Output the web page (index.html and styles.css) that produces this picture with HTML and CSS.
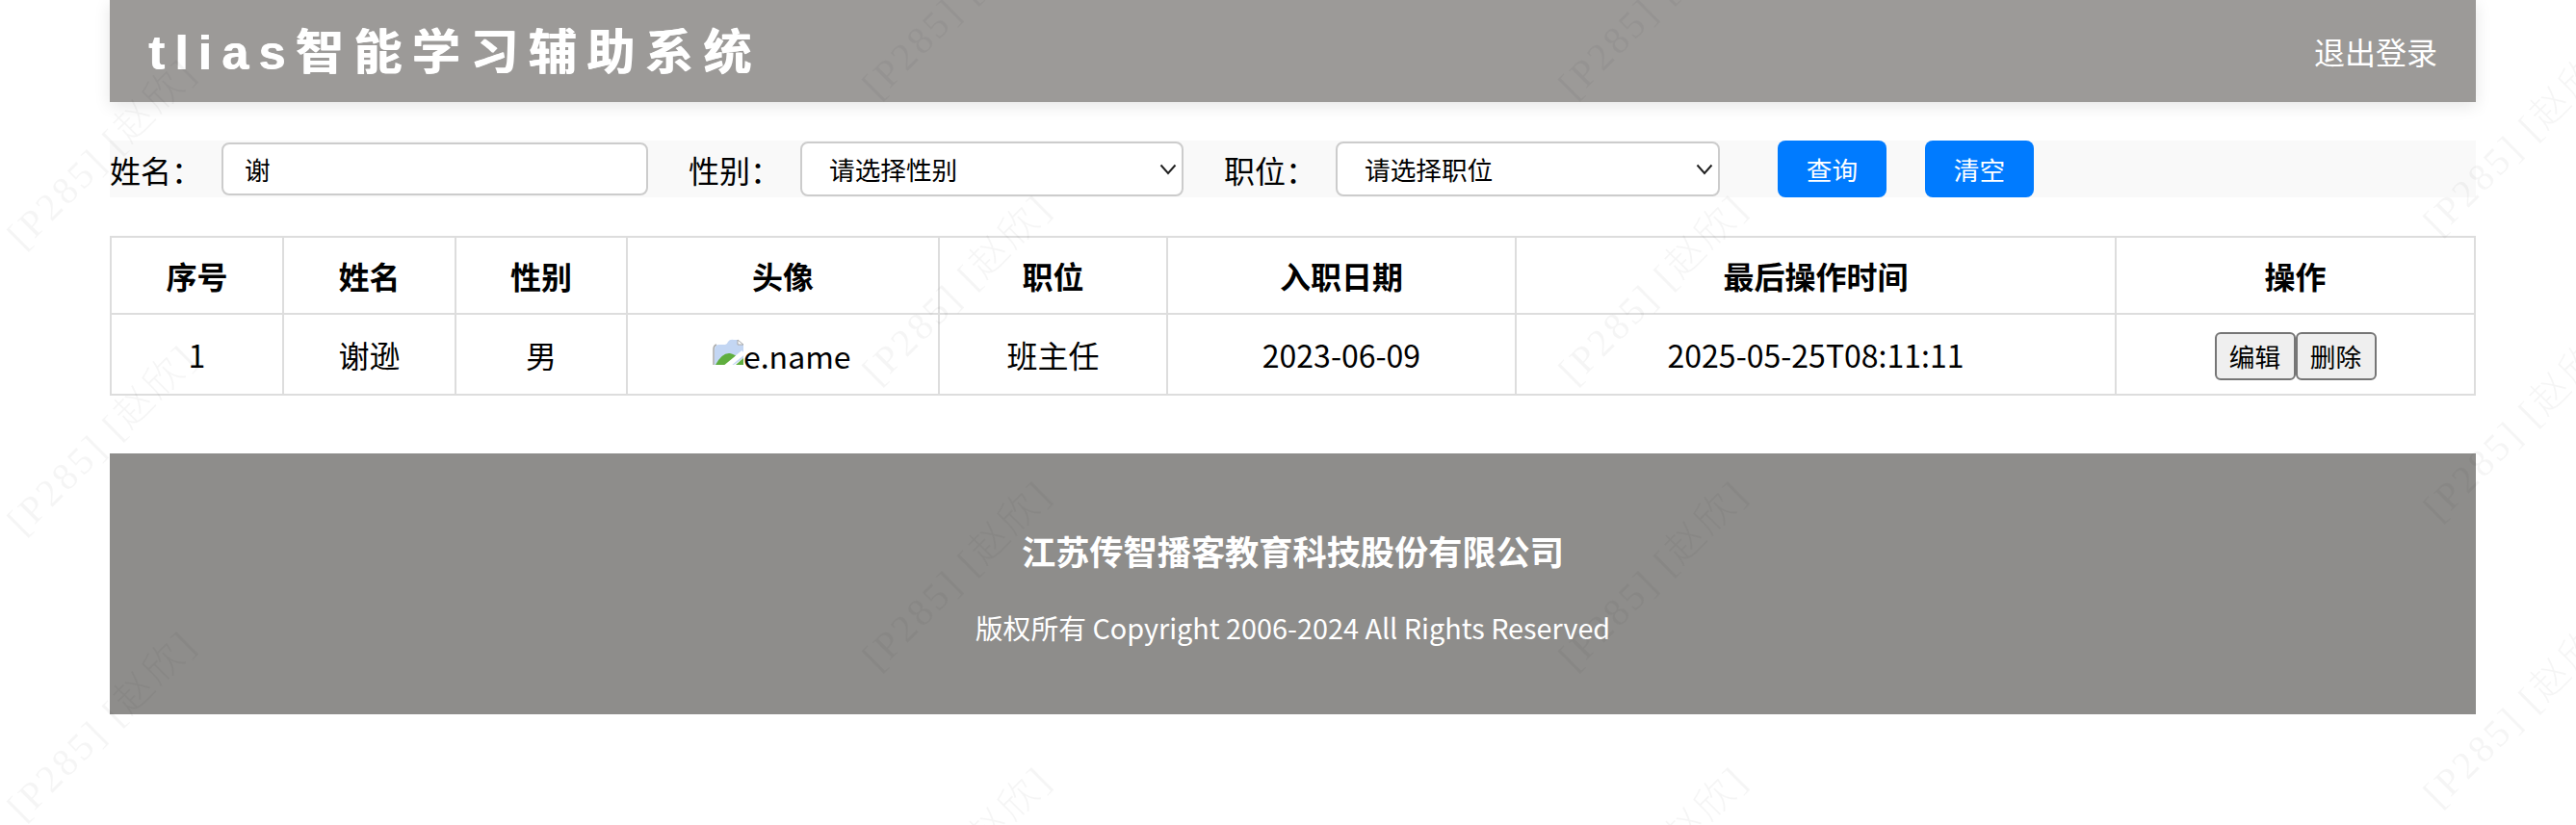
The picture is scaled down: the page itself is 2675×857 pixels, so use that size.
FILE: index.html
```html
<!DOCTYPE html>
<html lang="zh-CN">
<head>
    <meta charset="UTF-8">
    <meta name="viewport" content="width=device-width, initial-scale=1.0">
    <title>tlias智能学习辅助系统</title>
    <link rel="stylesheet" href="styles.css">
</head>
<body>
    <div class="container">
        <!-- 顶部标题栏 -->
        <header class="header">
            <div class="title">tlias智能学习辅助系统</div>
            <a href="#" class="logout">退出登录</a>
        </header>

        <!-- 搜索栏 -->
        <form class="search-form">
            <div class="search-item">
                <label>姓名：</label>
                <input type="text" class="name-input" value="谢">
            </div>
            <div class="search-item">
                <label>性别：</label>
                <select class="field-select select-gender">
                    <option>请选择性别</option>
                    <option>男</option>
                    <option>女</option>
                </select>
            </div>
            <div class="search-item">
                <label>职位：</label>
                <select class="field-select">
                    <option>请选择职位</option>
                    <option>班主任</option>
                    <option>讲师</option>
                </select>
            </div>
            <div class="search-actions">
                <button type="button" class="btn-primary">查询</button>
                <button type="button" class="btn-primary">清空</button>
            </div>
        </form>

        <!-- 员工列表 -->
        <table class="emp-table">
            <colgroup>
                <col class="col-id">
                <col class="col-name">
                <col class="col-gender">
                <col class="col-avatar">
                <col class="col-job">
                <col class="col-date">
                <col class="col-time">
                <col>
            </colgroup>
            <thead>
                <tr>
                    <th>序号</th>
                    <th>姓名</th>
                    <th>性别</th>
                    <th>头像</th>
                    <th>职位</th>
                    <th>入职日期</th>
                    <th>最后操作时间</th>
                    <th>操作</th>
                </tr>
            </thead>
            <tbody>
                <tr>
                    <td>1</td>
                    <td>谢逊</td>
                    <td>男</td>
                    <td>
                        <span class="avatar">
                            <svg class="broken-img" viewBox="0 0 32 28" aria-hidden="true">
                                <path d="M2 27V11Q2 6 7 6H13Q15 6 16 3Q18 0 22 1L26 1L32 6V20L22 27Z" fill="#c3d6f3"/>
                                <path d="M26 1V6H32L26 1Z" fill="#fff" stroke="#a8a8a8" stroke-width="1"/>
                                <path d="M3 27Q10 14 18 15Q22 16 25 18L15 27Z" fill="#5fae3e"/>
                                <path d="M24 27L32 20V27Z" fill="#5fae3e"/>
                                <path d="M1 27V11Q1 7 4 6" fill="none" stroke="#a8a8a8" stroke-width="1.5"/>
                                <path d="M14 29L32 14" stroke="#fff" stroke-width="5"/>
                            </svg><span class="avatar-alt">e.name</span>
                        </span>
                    </td>
                    <td>班主任</td>
                    <td>2023-06-09</td>
                    <td>2025-05-25T08:11:11</td>
                    <td><button type="button" class="btn-row">编辑</button><button type="button" class="btn-row">删除</button></td>
                </tr>
            </tbody>
        </table>

        <!-- 页脚 -->
        <footer class="footer">
            <p class="company">江苏传智播客教育科技股份有限公司</p>
            <p class="copyright">版权所有 Copyright 2006-2024 All Rights Reserved</p>
        </footer>
    </div>

    <!-- 水印层 -->
    <div class="watermark">
        <div class="wm-col wm-col-1">
            <span>[P285] [赵欣]</span>
            <span>[P285] [赵欣]</span>
            <span>[P285] [赵欣]</span>
        </div>
        <div class="wm-col wm-col-2">
            <span>[P285] [赵欣]</span>
            <span>[P285] [赵欣]</span>
            <span>[P285] [赵欣]</span>
            <span>[P285] [赵欣]</span>
        </div>
        <div class="wm-col wm-col-3">
            <span>[P285] [赵欣]</span>
            <span>[P285] [赵欣]</span>
            <span>[P285] [赵欣]</span>
            <span>[P285] [赵欣]</span>
        </div>
        <div class="wm-col wm-col-4">
            <span>[P285] [赵欣]</span>
            <span>[P285] [赵欣]</span>
            <span>[P285] [赵欣]</span>
        </div>
    </div>
</body>
</html>
```

FILE: styles.css
```css
* {
    box-sizing: border-box;
}

body {
    margin: 0;
    padding: 0 104px 0 114px;
    height: 857px;
    overflow: hidden;
    background: #fff;
    color: #000;
    font-family: "Noto Sans CJK SC", "Noto Sans", sans-serif;
    font-size: 32px;
}

/* 顶部标题栏 */
.header {
    display: flex;
    justify-content: space-between;
    align-items: center;
    height: 106px;
    padding: 0 40px;
    background: #9c9a98;
    box-shadow: 0 4px 16px rgba(0, 0, 0, 0.1);
}

.title {
    padding-bottom: 6px;
    font-family: "Liberation Sans", "Noto Sans CJK SC", sans-serif;
    font-size: 50px;
    font-weight: bold;
    letter-spacing: 10.5px;
    color: #fff;
    text-shadow: 1px 0 0 #fff;
}

.logout {
    color: #fff;
    text-decoration: none;
}

/* 搜索栏 */
.search-form {
    display: flex;
    align-items: center;
    gap: 42px;
    height: 59px;
    margin-top: 40px;
    background: #f9f9f9;
}

.search-item {
    display: flex;
    align-items: center;
    gap: 20px;
}

.search-item label {
    width: 96px;
    font-family: "Noto Sans CJK JP", sans-serif;
    white-space: nowrap;
}

.name-input {
    width: 443px;
    height: 55px;
    padding: 0 22px;
    border: 2px solid #ccc;
    border-radius: 8px;
    font-family: inherit;
    font-size: 26.67px;
    color: #000;
}

.field-select {
    appearance: none;
    width: 399px;
    height: 57px;
    padding: 0 28px;
    border: 2px solid #ccc;
    border-radius: 8px;
    background: #fff url("data:image/svg+xml,%3Csvg xmlns='http://www.w3.org/2000/svg' width='18' height='12' viewBox='0 0 18 12'%3E%3Cpath d='M1.5 1.5L9 10L16.5 1.5' fill='none' stroke='%23222' stroke-width='2'/%3E%3C/svg%3E") no-repeat right 5px center;
    font-family: inherit;
    font-size: 26.67px;
    color: #000;
}

.select-gender {
    width: 398px;
}

.search-actions {
    display: flex;
    gap: 40px;
    margin-left: 18px;
}

.btn-primary {
    width: 113px;
    height: 59px;
    border: none;
    border-radius: 8px;
    background: #007bff;
    color: #fff;
    font-family: inherit;
    font-size: 26.67px;
}

/* 员工列表 */
.emp-table {
    width: 100%;
    margin-top: 40px;
    border-collapse: collapse;
    table-layout: fixed;
}

.col-id { width: 179px; }
.col-name { width: 179px; }
.col-gender { width: 178px; }
.col-avatar { width: 324px; }
.col-job { width: 237px; }
.col-date { width: 362px; }
.col-time { width: 623px; }

.emp-table th,
.emp-table td {
    border: 2px solid #ddd;
    padding: 0;
    text-align: center;
    font-size: 32px;
}

.emp-table th {
    height: 80px;
    font-weight: bold;
}

.emp-table td {
    height: 84px;
}

.avatar {
    display: inline-flex;
    align-items: flex-end;
    width: 146px;
    height: 40px;
    overflow: hidden;
    vertical-align: middle;
}

.broken-img {
    flex: none;
    width: 32px;
    height: 28px;
    margin-bottom: 12px;
}

.avatar-alt {
    line-height: 34px;
    height: 40px;
}

.btn-row {
    width: 84px;
    height: 50px;
    padding: 0;
    border: 2px solid #767676;
    border-radius: 6px;
    background: #efefef;
    color: #000;
    font-family: inherit;
    font-size: 26.67px;
    vertical-align: middle;
}

/* 页脚 */
.footer {
    height: 271px;
    margin-top: 60px;
    padding-top: 75px;
    background: #8e8d8b;
    color: #fff;
    text-align: center;
}

.footer p {
    margin: 0;
}

.company {
    font-size: 35.2px;
    font-weight: bold;
}

.footer .copyright {
    margin-top: 34px;
    font-size: 28.8px;
}

/* 水印层 */
.watermark {
    position: fixed;
    inset: 0;
    overflow: hidden;
    pointer-events: none;
}

.wm-col {
    position: absolute;
    display: flex;
    flex-direction: column;
    width: 300px;
}

.wm-col span {
    display: flex;
    flex: none;
    justify-content: center;
    align-items: center;
    height: 297px;
    transform: rotate(-45deg);
    font-family: "Liberation Serif", "Noto Sans CJK SC", serif;
    font-size: 40px;
    font-weight: 300;
    letter-spacing: 3px;
    white-space: nowrap;
    color: rgba(0, 0, 0, 0.04);
}

.wm-col-1 { left: -47px; top: 8px; }
.wm-col-2 { left: 841px; top: -148px; }
.wm-col-3 { left: 1564px; top: -148px; }
.wm-col-4 { left: 2462px; top: -6px; }
```
